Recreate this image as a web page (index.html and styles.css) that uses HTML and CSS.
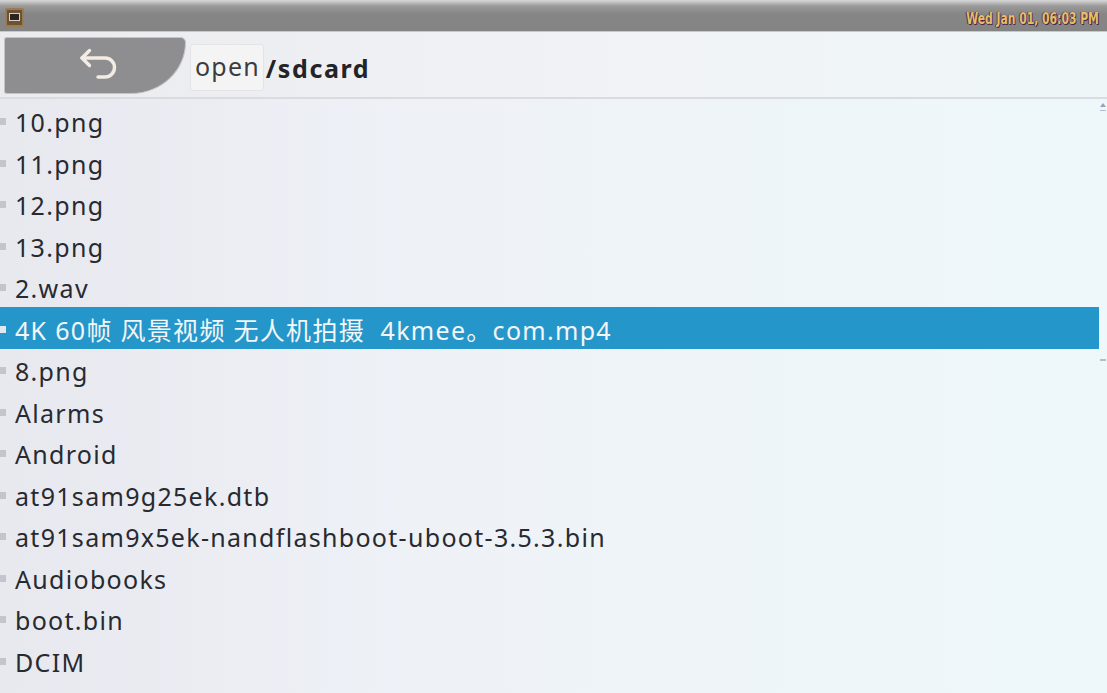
FILE: index.html
```html
<!DOCTYPE html>
<html>
<head>
<meta charset="utf-8">
<link rel="stylesheet" href="styles.css">
</head>
<body>
<div class="screen">
  <div class="topbar">
    <div class="app-icon"><div class="app-icon-inner"></div></div>
    <div class="clock">Wed Jan 01, 06:03 PM</div>
  </div>
  <div class="header">
    <div class="back">
      <svg class="back-arrow" width="48" height="36" viewBox="0 0 48 36">
        <path d="M8 11 H31 A9.5 9.5 0 0 1 31 30 H24" fill="none" stroke="#f4ece4" stroke-width="3.4" stroke-linecap="round" stroke-linejoin="round"/>
        <path d="M15.5 3.5 L8 11 L15.5 18.5" fill="none" stroke="#f4ece4" stroke-width="3.4" stroke-linecap="round" stroke-linejoin="round"/>
      </svg>
    </div>
    <div class="path">
      <span class="open">open</span><span class="dir">/sdcard</span>
    </div>
  </div>
  <div class="content">
    <div class="list">
      <div class="row"><span class="mark"></span><span class="name">10.png</span></div>
      <div class="row"><span class="mark"></span><span class="name">11.png</span></div>
      <div class="row"><span class="mark"></span><span class="name">12.png</span></div>
      <div class="row"><span class="mark"></span><span class="name">13.png</span></div>
      <div class="row"><span class="mark"></span><span class="name">2.wav</span></div>
      <div class="row selected"><span class="mark"></span><span class="name">4K 60帧 风景视频 无人机拍摄&nbsp; 4kmee。com.mp4</span></div>
      <div class="row"><span class="mark"></span><span class="name">8.png</span></div>
      <div class="row"><span class="mark"></span><span class="name">Alarms</span></div>
      <div class="row"><span class="mark"></span><span class="name">Android</span></div>
      <div class="row"><span class="mark"></span><span class="name">at91sam9g25ek.dtb</span></div>
      <div class="row"><span class="mark"></span><span class="name">at91sam9x5ek-nandflashboot-uboot-3.5.3.bin</span></div>
      <div class="row"><span class="mark"></span><span class="name">Audiobooks</span></div>
      <div class="row"><span class="mark"></span><span class="name">boot.bin</span></div>
      <div class="row"><span class="mark"></span><span class="name">DCIM</span></div>
    </div>
    <div class="scrollbar">
      <div class="scroll-up"></div>
      <div class="scroll-line"></div>
      <div class="scroll-thumb"></div>
    </div>
  </div>
</div>
</body>
</html>
```

FILE: styles.css
```css
* { box-sizing: border-box; }
html, body {
  margin: 0;
  padding: 0;
  width: 1107px;
  height: 693px;
  overflow: hidden;
}
body {
  font-family: "Noto Sans", "Open Sans", "Noto Sans CJK SC", sans-serif;
  background: linear-gradient(90deg, #e8e8ef 0%, #eef2f7 40%, #eef8fa 100%);
}
.screen {
  width: 1107px;
  height: 693px;
  display: flex;
  flex-direction: column;
}
.topbar {
  height: 32px;
  flex: none;
  display: flex;
  align-items: center;
  justify-content: space-between;
  padding: 0 8px 0 5px;
  background: linear-gradient(180deg, #d8d8d8 0px, #9a9a9a 6px, #868686 14px, #848484 31px, #c8c8cc 31px, #c8c8cc 32px);
}
.app-icon {
  width: 19px;
  height: 19px;
  margin-top: 2px;
  background: #6b5236;
  border: 2px solid #9a7c52;
  border-radius: 2px;
  display: flex;
  align-items: center;
  justify-content: center;
}
.app-icon-inner {
  width: 11px;
  height: 8px;
  background: #2a241c;
  border: 1px solid #d8d0c0;
}
.clock {
  font-family: "Liberation Sans Narrow", "DejaVu Sans Condensed", "Liberation Sans", sans-serif;
  font-weight: bold;
  font-size: 15px;
  color: #e6be6a;
  text-shadow: 0 0 1px #4a2848, 1px 1px 0 #4a2848, -1px 0 0 #5a3858;
  margin-top: 5px;
  transform: scaleX(0.8);
  transform-origin: right center;
}
.header {
  height: 67px;
  flex: none;
  display: flex;
  align-items: flex-start;
  padding: 5px 0 0 4px;
  border-bottom: 2px solid #d9dbe0;
  background: linear-gradient(90deg, #ebebee 0%, #f1f3f6 60%, #eef6f8 100%);
}
.back {
  width: 182px;
  height: 57px;
  background: #8e8e90;
  border: 1px solid #c4c4c6;
  border-radius: 3px 6px 60px 3px / 3px 6px 56px 3px;
  display: flex;
  align-items: center;
  justify-content: center;
}
.back-arrow {
  margin-left: 6px;
  margin-top: -1px;
}
.path {
  display: flex;
  align-items: center;
  margin-left: 4px;
  margin-top: 7px;
  font-size: 25px;
  letter-spacing: 1.2px;
}
.open {
  background: #f4f4f4;
  border: 1px solid #e4e4e6;
  border-radius: 3px;
  padding: 3px 3px 6px 4px;
  color: #3c3c40;
  line-height: 36px;
}
.dir {
  margin-left: 2px;
  font-weight: bold;
  color: #222428;
  letter-spacing: 1.6px;
}
.content {
  display: flex;
  flex: 1;
}
.list {
  width: 1099px;
  padding-top: 0.5px;
  display: flex;
  flex-direction: column;
}
.row {
  height: 41.5px;
  display: flex;
  align-items: center;
  font-size: 25px;
  letter-spacing: 1.3px;
  color: #272a30;
}
.mark {
  width: 6px;
  height: 7px;
  background: #c4c4cc;
  margin-right: 9px;
  margin-top: 3px;
  flex: none;
}
.name {
  white-space: nowrap;
  line-height: 1;
  margin-top: 5px;
}
.selected {
  background: #2596c9;
  color: #f2f6f8;
}
.selected .mark {
  background: #e4e8ee;
}
.scrollbar {
  width: 8px;
  display: flex;
  flex-direction: column;
  align-items: center;
  padding-top: 4px;
}
.scroll-up {
  width: 0;
  height: 0;
  border-left: 3px solid transparent;
  border-right: 3px solid transparent;
  border-bottom: 4px solid #9aa0c0;
}
.scroll-line {
  width: 6px;
  height: 1px;
  margin-top: 3px;
  background: #b8bcc4;
}
.scroll-thumb {
  width: 6px;
  height: 2px;
  margin-top: 248px;
  background: #b8bcc4;
}
```
